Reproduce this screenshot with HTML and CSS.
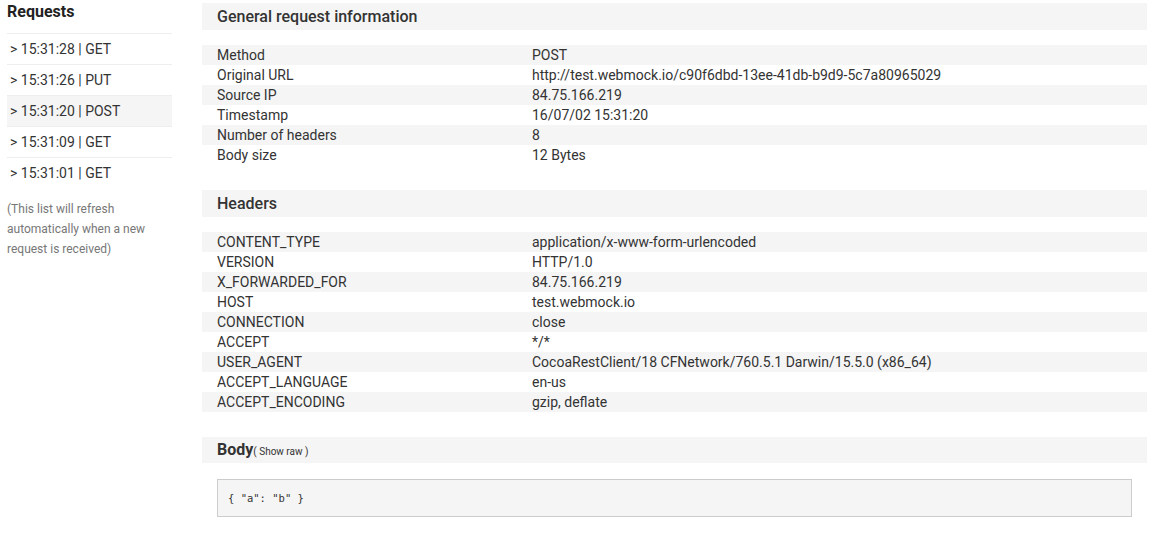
FILE: index.html
```html
<!DOCTYPE html>
<html>
<head>
<meta charset="utf-8">
<link rel="stylesheet" href="styles.css">
</head>
<body>
<div class="page">
  <aside class="sidebar">
    <h2 class="side-title">Requests</h2>
    <ul class="req-list">
      <li class="req">&gt; 15:31:28 | GET</li>
      <li class="req">&gt; 15:31:26 | PUT</li>
      <li class="req active">&gt; 15:31:20 | POST</li>
      <li class="req">&gt; 15:31:09 | GET</li>
      <li class="req">&gt; 15:31:01 | GET</li>
    </ul>
    <p class="note">(This list will refresh automatically when a new request is received)</p>
  </aside>
  <main class="main">
    <section class="section">
      <h3 class="bar">General request information</h3>
      <div class="table">
        <div class="row"><span class="k">Method</span><span class="v">POST</span></div>
        <div class="row"><span class="k">Original URL</span><span class="v">http://test.webmock.io/c90f6dbd-13ee-41db-b9d9-5c7a80965029</span></div>
        <div class="row"><span class="k">Source IP</span><span class="v">84.75.166.219</span></div>
        <div class="row"><span class="k">Timestamp</span><span class="v">16/07/02 15:31:20</span></div>
        <div class="row"><span class="k">Number of headers</span><span class="v">8</span></div>
        <div class="row"><span class="k">Body size</span><span class="v">12 Bytes</span></div>
      </div>
    </section>
    <section class="section">
      <h3 class="bar">Headers</h3>
      <div class="table">
        <div class="row"><span class="k">CONTENT_TYPE</span><span class="v">application/x-www-form-urlencoded</span></div>
        <div class="row"><span class="k">VERSION</span><span class="v">HTTP/1.0</span></div>
        <div class="row"><span class="k">X_FORWARDED_FOR</span><span class="v">84.75.166.219</span></div>
        <div class="row"><span class="k">HOST</span><span class="v">test.webmock.io</span></div>
        <div class="row"><span class="k">CONNECTION</span><span class="v">close</span></div>
        <div class="row"><span class="k">ACCEPT</span><span class="v">*/*</span></div>
        <div class="row"><span class="k">USER_AGENT</span><span class="v">CocoaRestClient/18 CFNetwork/760.5.1 Darwin/15.5.0 (x86_64)</span></div>
        <div class="row"><span class="k">ACCEPT_LANGUAGE</span><span class="v">en-us</span></div>
        <div class="row"><span class="k">ACCEPT_ENCODING</span><span class="v">gzip, deflate</span></div>
      </div>
    </section>
    <section class="section">
      <h3 class="bar body-bar"><span class="body-title">Body</span><span class="raw">( Show raw )</span></h3>
      <pre class="code">{ "a": "b" }</pre>
    </section>
  </main>
</div>
</body>
</html>
```
FILE: styles.css
```css
* { box-sizing: border-box; }
html, body { margin: 0; padding: 0; background: #fff; }
body {
  font-family: Roboto, "Liberation Sans", Arial, sans-serif;
  font-size: 14px;
  color: #333;
}
.page {
  display: flex;
  gap: 30px;
  padding: 3px 11px 0 7px;
}
.sidebar {
  width: 165px;
  flex: none;
}
.side-title {
  margin: 0;
  height: 30px;
  font-size: 16px;
  font-weight: 700;
  line-height: 18px;
  padding-top: 0;
  color: #222;
}
.req-list {
  list-style: none;
  margin: 0;
  padding: 0;
}
.req {
  border-top: 1px solid #eee;
  height: 31px;
  line-height: 30px;
  padding-left: 3px;
  font-size: 14px;
}
.req.active { background: #f5f5f5; }
.note {
  margin: 11px 0 0;
  font-size: 12px;
  line-height: 20px;
  color: #777;
}
.main {
  flex: 1;
  min-width: 0;
}
.section { margin-bottom: 25px; }
.bar {
  margin: 0;
  height: 27px;
  line-height: 27px;
  padding-left: 15px;
  background: #f5f5f5;
  font-size: 16px;
  font-weight: 500;
  color: #333;
}
.body-bar { height: 26px; line-height: 26px; }
.body-title { font-weight: 700; }
.raw { font-size: 10px; font-weight: 400; }
.table { margin-top: 15px; }
.row {
  display: grid;
  grid-template-columns: 315px 1fr;
  height: 20px;
  line-height: 20px;
  padding-left: 15px;
}
.row:nth-child(odd) { background: #f5f5f5; }
.code {
  margin: 16px 15px 0;
  height: 38px;
  border: 1px solid #ccc;
  background: #f5f5f5;
  padding: 0 10px;
  font-family: "DejaVu Sans Mono", "Liberation Mono", monospace;
  font-size: 10.5px;
  line-height: 36px;
  color: #333;
}
```
